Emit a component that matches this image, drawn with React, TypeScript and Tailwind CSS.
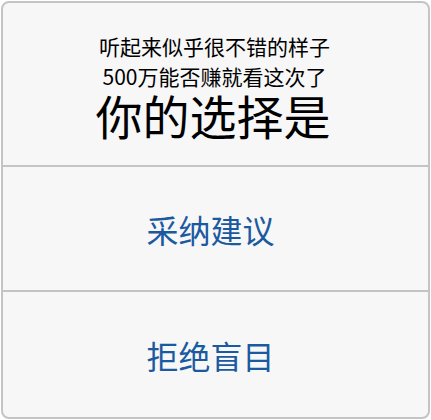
export default function App() {
  const font = { fontFamily: '"Noto Sans CJK SC", "Noto Sans", sans-serif' };
  return (
    <div className="p-px" style={font}>
      <div className="flex h-[418px] w-[429px] flex-col rounded-[8px] border-2 border-[#c4c4c4] bg-[#f7f7f7]">
        <div className="flex h-[162px] flex-col items-center justify-center pt-[2px] text-black">
          <div className="pr-[2px] text-[21px] leading-[31px]">听起来似乎很不错的样子</div>
          <div className="pr-[2px] text-[21px] leading-[29px]">500万能否赚就看这次了</div>
          <div className="pr-[5px] text-[47px] leading-[48px]">你的选择是</div>
        </div>
        <button className="h-[125px] border-t-2 border-[#c4c4c4] pr-[10px] text-[32px] text-[#1b5aa0]">
          采纳建议
        </button>
        <button className="h-[127px] border-t-2 border-[#c4c4c4] pr-[10px] text-[32px] text-[#1b5aa0]">
          拒绝盲目
        </button>
      </div>
    </div>
  );
}
